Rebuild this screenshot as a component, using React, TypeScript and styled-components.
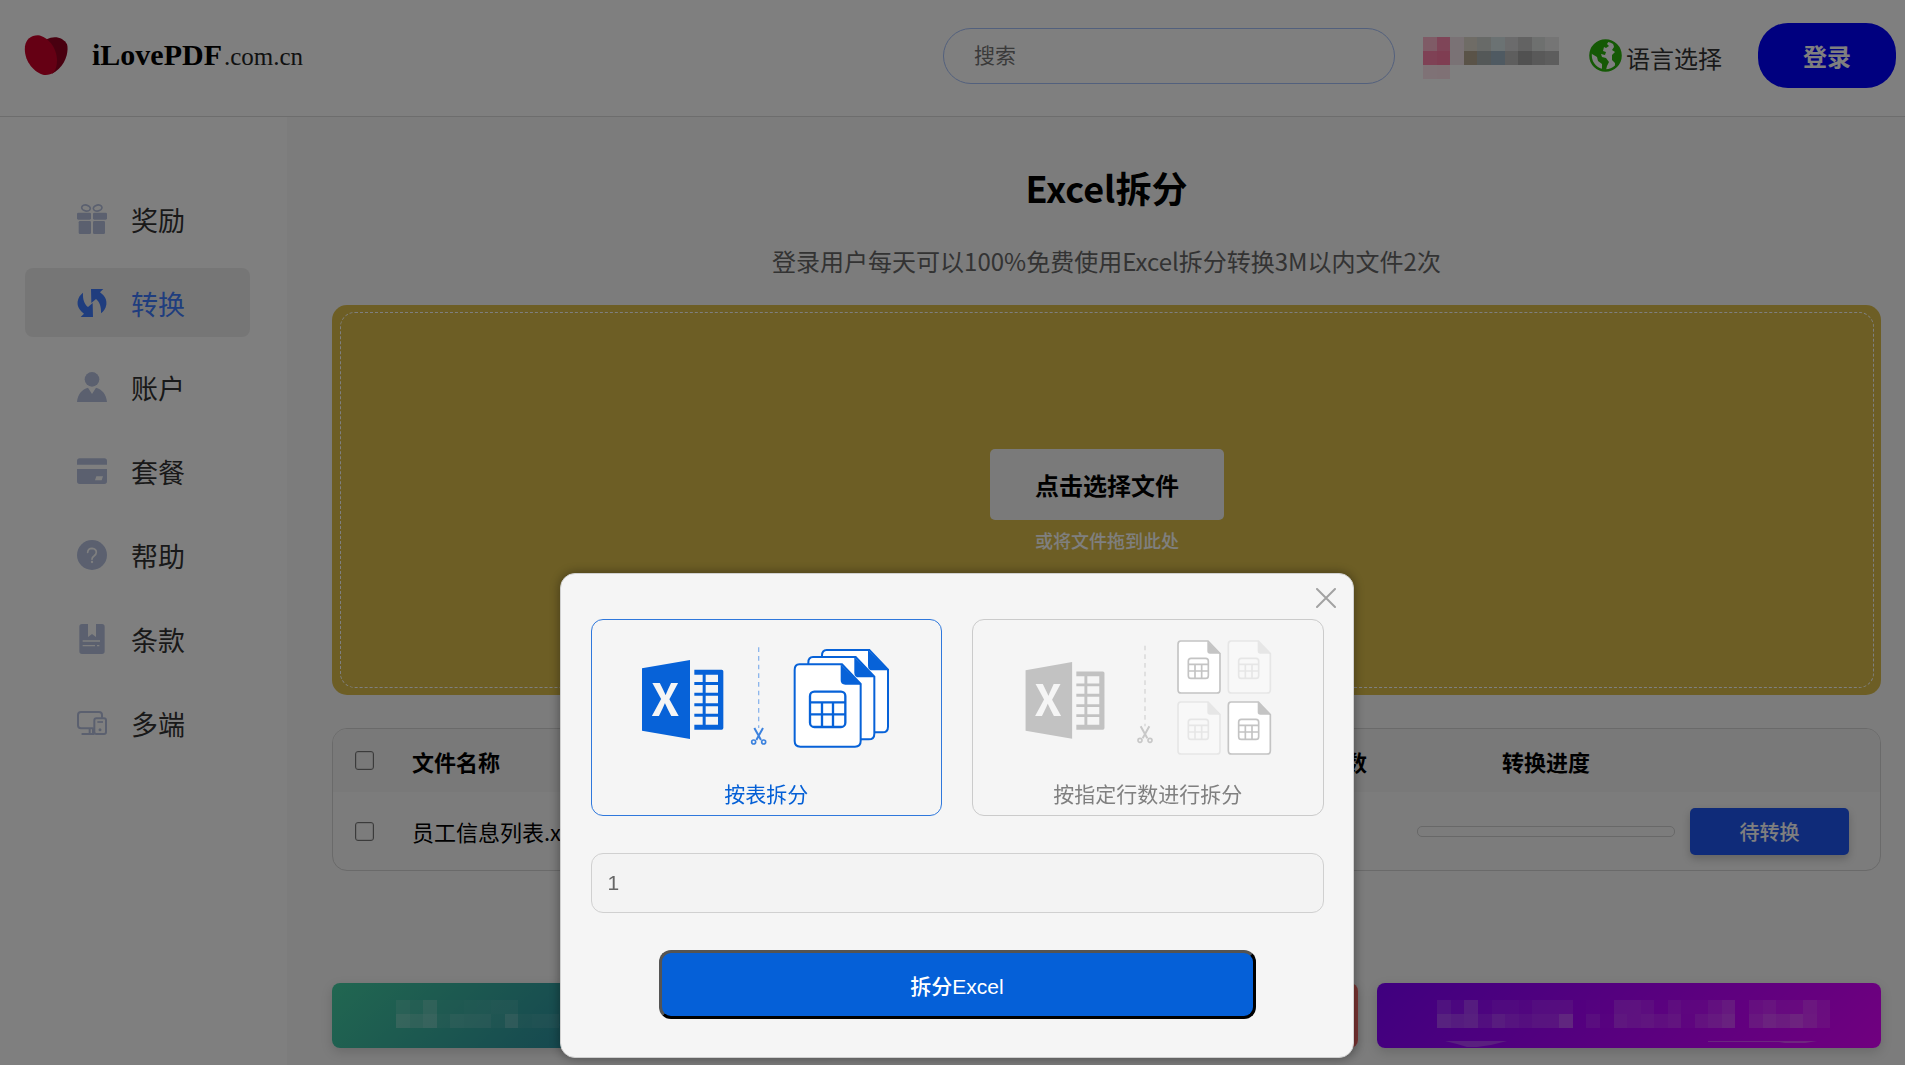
import React, { useState } from "react";
import styled, { createGlobalStyle } from "styled-components";

const GlobalStyle = createGlobalStyle`
  *, *::before, *::after { box-sizing: border-box; }
  body {
    margin: 0;
    background: #f8f8f8;
    color: #000;
    font-family: "Noto Sans CJK SC", "Noto Sans", sans-serif;
  }
  button, input { font-family: inherit; }
  h1, p, ul { margin: 0; padding: 0; }
`;

const Page = styled.div`
  min-height: 100vh;
  display: flex;
  flex-direction: column;
`;

/* ---------- header ---------- */

const Header = styled.header`
  display: flex;
  align-items: center;
  height: 117px;
  padding: 0 9px 5px 24px;
  background: #fff;
  border-bottom: 1px solid #dadada;
`;

const Brand = styled.a`
  display: flex;
  align-items: center;
  gap: 24px;
  margin-right: auto;
  color: #000;
  text-decoration: none;
  font-family: "Liberation Serif", serif;
`;

const BrandName = styled.span`
  font-size: 30px;
  font-weight: 700;
  line-height: 40px;
`;

const BrandDomain = styled.span`
  margin-left: 2px;
  font-size: 25px;
  font-weight: 400;
  color: #222;
`;

const SearchInput = styled.input`
  width: 452px;
  height: 56px;
  padding: 0 30px 3px;
  border: 1px solid #a5c0fa;
  border-radius: 28px;
  background: transparent;
  font-size: 21px;
  outline: none;
  &::placeholder { color: #757575; }
`;

const Mosaic = styled.div<{ $cols: number; $left?: number }>`
  display: grid;
  grid-template-columns: repeat(${(p) => p.$cols}, 1fr);
  grid-auto-rows: 14px;
  width: ${(p) => Math.round(p.$cols * 13.55)}px;
  margin-left: ${(p) => p.$left ?? 0}px;
`;

const Cell = styled.i<{ $color: string }>`
  background: ${(p) => p.$color};
`;

const HeaderMosaic = styled(Mosaic)`
  margin: 5px 30px 0 28px;
`;

const Language = styled.button`
  display: flex;
  align-items: center;
  gap: 4px;
  padding: 0;
  border: 0;
  background: none;
  color: #333;
  font-size: 24px;
  line-height: 36px;
  svg { width: 33px; height: 33px; }
  span { padding-top: 5px; }
`;

const LoginButton = styled.button`
  width: 138px;
  height: 65px;
  margin-left: 36px;
  border: 0;
  border-radius: 30px;
  background: #00f;
  color: #fff;
  font-size: 24px;
  font-weight: 700;
`;

/* ---------- sidebar ---------- */

const Body = styled.div`
  flex: 1;
  display: flex;
`;

const Sidebar = styled.nav`
  flex: 0 0 287px;
  padding: 67px 37px 0 25px;
  background: #fff;
  ul {
    display: flex;
    flex-direction: column;
    gap: 15px;
    list-style: none;
  }
`;

const NavLink = styled.a<{ $active?: boolean }>`
  display: flex;
  align-items: center;
  gap: 24px;
  height: 69px;
  padding-left: 52px;
  border-radius: 8px;
  background: ${(p) => (p.$active ? "#ededed" : "transparent")};
  color: ${(p) => (p.$active ? "#3f7bfc" : "#333")};
  font-size: 27px;
  text-decoration: none;
  svg {
    width: 30px;
    height: 30px;
    color: ${(p) => (p.$active ? "#3f7bfc" : "#b6c1df")};
  }
  span { padding-top: 2px; }
`;

/* ---------- main ---------- */

const Main = styled.main`
  flex: 1;
  min-width: 0;
  padding: 42px 24px 18px 45px;
`;

const Title = styled.h1`
  font-size: 36px;
  line-height: 56px;
  font-weight: 700;
  text-align: center;
`;

const Subtitle = styled.p`
  margin-top: 28px;
  color: #666;
  font-size: 24px;
  line-height: 36px;
  text-align: center;
`;

const DropZone = styled.section`
  height: 390px;
  margin-top: 26px;
  padding: 7px 7px 7px 8px;
  border-radius: 15px;
  background: #dbbd4a;
`;

const DropInner = styled.div`
  display: flex;
  flex-direction: column;
  align-items: center;
  height: 100%;
  padding-top: 136px;
  border: 1px dashed #fff;
  border-radius: 15px;
`;

const PickButton = styled.button`
  width: 234px;
  height: 71px;
  border: 0;
  border-radius: 5px;
  background: #f4f4f4;
  color: #000;
  font-size: 24px;
  font-weight: 700;
`;

const DropHint = styled.p`
  margin-top: 6px;
  color: #fff;
  font-size: 18px;
  font-weight: 500;
  line-height: 28px;
`;

const TableFrame = styled.section`
  margin-top: 33px;
  border: 1px solid #d4d4d4;
  border-radius: 15px;
  overflow: hidden;
`;

const FileTable = styled.table`
  width: 100%;
  table-layout: fixed;
  border-collapse: collapse;
  font-size: 22px;
  line-height: 32px;
  th, td { padding: 0; text-align: center; }
  thead tr { height: 63px; background: #f3f3f3; }
  tbody tr { height: 78px; }
`;

const Col = styled.col<{ $w?: number }>`
  width: ${(p) => (p.$w ? `${p.$w}px` : "auto")};
`;

const NameHead = styled.th`
  && { text-align: left; }
`;

const NameCell = styled.td`
  && { text-align: left; }
`;

const TickBox = styled.input`
  appearance: none;
  display: block;
  width: 19px;
  height: 19px;
  margin: 0 0 0 22px;
  border: 1px solid #767676;
  border-radius: 3px;
  background: transparent;
  outline: 0;
  box-shadow: inset 0 0 0 1px rgba(118, 118, 118, 0.2);
`;

const Progress = styled.div`
  height: 11px;
  margin: 0 15px;
  border: 1px solid #d0d0d0;
  border-radius: 5px;
`;

const ConvertButton = styled.button`
  display: block;
  width: 159px;
  height: 47px;
  border: 0;
  border-radius: 5px;
  background: #1f56f2;
  color: #fff;
  font-size: 20px;
  font-weight: 500;
  box-shadow: 0 4px 8px rgba(0, 0, 0, 0.2);
`;

const Promos = styled.section`
  display: grid;
  grid-template-columns: repeat(3, 1fr);
  gap: 19px;
  margin-top: 112px;
`;

const Promo = styled.a<{ $from: string; $to: string }>`
  position: relative;
  display: flex;
  align-items: center;
  height: 65px;
  padding: 0 0 3px 64px;
  border-radius: 8px;
  background: linear-gradient(135deg, ${(p) => p.$from}, ${(p) => p.$to});
  color: #fff;
  font-size: 24px;
  text-decoration: none;
  box-shadow: 0 4px 12px rgba(0, 0, 0, 0.15);
`;

const PromoWisps = styled.svg`
  position: absolute;
  right: 0;
  bottom: 0;
`;

/* ---------- modal ---------- */

const Overlay = styled.div`
  position: fixed;
  inset: 0;
  display: flex;
  align-items: flex-end;
  justify-content: center;
  padding: 0 0 7px 8px;
  background: rgba(0, 0, 0, 0.5);
`;

const Dialog = styled.form`
  position: relative;
  display: flex;
  flex-direction: column;
  width: 794px;
  padding: 45px 29px 38px 30px;
  border: 1px solid #d0d0d0;
  border-radius: 15px;
  background: #f5f5f5;
  box-shadow: 0 0 12px rgba(0, 0, 0, 0.4);
`;

const CloseButton = styled.button`
  position: absolute;
  top: 14px;
  right: 17px;
  width: 20px;
  height: 20px;
  padding: 0;
  border: 0;
  background: none;
  svg { display: block; }
`;

const Options = styled.div`
  display: grid;
  grid-template-columns: 1fr 1fr;
  gap: 30px;
`;

const Option = styled.button<{ $active: boolean }>`
  display: flex;
  flex-direction: column;
  align-items: center;
  height: 197px;
  padding: 0;
  border: 1px solid ${(p) => (p.$active ? "#2f78dc" : "#cbcbcb")};
  border-radius: 12px;
  background: transparent;
  color: ${(p) => (p.$active ? "#0560d6" : "#808080")};
  font-size: 21px;
  line-height: 32px;
  svg { display: block; width: 348px; height: 149px; margin-bottom: 8px; }
`;

const RowsInput = styled.input`
  height: 60px;
  margin-top: 37px;
  padding: 0 16px;
  border: 1px solid #d0d0d0;
  border-radius: 12px;
  background: #f3f3f3;
  color: #666;
  font-family: "Liberation Sans", sans-serif;
  font-size: 21px;
  outline: none;
`;

const SplitButton = styled.button`
  width: 597px;
  height: 69px;
  margin: 37px auto 0;
  border: 3px outset #000;
  border-radius: 12px;
  background: #0560d8;
  color: #fff;
  font-family: "Liberation Sans", "Noto Sans CJK SC", sans-serif;
  font-size: 21px;
  font-weight: 500;
`;

/* ---------- drawings ---------- */

const HeartLogo = () => (
  <svg width="44" height="41" viewBox="0 0 132 123" aria-hidden="true">
    <path d="M68 13C90 0 119 7 129 28C136 52 122 98 84 116C70 90 60 40 68 13Z" fill="#930020" />
    <path d="M3 34C6 14 20 1 42 1C72 5 98 38 99 76C99 92 95 105 89 112C82 118 72 121 60 120C28 113-2 74 3 34Z" fill="#cb0028" />
  </svg>
);

const Globe = () => (
  <svg viewBox="0 0 33 33" aria-hidden="true">
    <circle cx="16.500" cy="16.500" r="15" fill="none" stroke="#2bb30b" strokeWidth="2.600" />
    <path
      fill="#2bb30b"
      d="M2 13C3 6 9 1 16 1L20 2L18 5L20 7L17 9L15 8L14 12L17 13L16 16L12 15L13 18L17 19L20 23L18 27L17 31L13 30L13 25L9 22L8 18L3 15Z"
    />
    <path fill="#2bb30b" d="M24 4C29 7 32 12 32 17C32 22 29 27 26 29L26 24L23 21L23 16L26 13L23 11L25 8Z" />
  </svg>
);

const GiftIcon = () => (
  <svg viewBox="0 0 90 90" fill="currentColor" aria-hidden="true">
    <ellipse cx="27" cy="12" rx="13" ry="9" fill="none" stroke="currentColor" strokeWidth="5" transform="rotate(12 27 12)" />
    <ellipse cx="62" cy="12" rx="13" ry="9" fill="none" stroke="currentColor" strokeWidth="5" transform="rotate(-12 62 12)" />
    <rect x="0" y="26" width="42" height="21" rx="4" />
    <rect x="48" y="26" width="42" height="21" rx="4" />
    <rect x="5" y="51" width="37" height="39" rx="4" />
    <rect x="48" y="51" width="36" height="39" rx="4" />
  </svg>
);

const ConvertIcon = () => {
  const d = "M42 3H79L69 13C84 24 90 36 88 50C86 62 80 70 72 76C73 56 68 42 57 33L43 45Z";
  return (
    <svg viewBox="0 0 90 90" fill="currentColor" aria-hidden="true">
      <path d={d} />
      <path d={d} transform="rotate(180 45 45)" />
    </svg>
  );
};

const UserIcon = () => (
  <svg viewBox="0 0 90 90" fill="currentColor" aria-hidden="true">
    <circle cx="45" cy="22" r="22" />
    <path d="M0 90C2 66 15 52 33 47L45 66L57 47C75 52 88 66 90 90Z" />
  </svg>
);

const CardIcon = () => (
  <svg viewBox="0 0 90 90" fill="currentColor" aria-hidden="true">
    <path d="M0 26V15Q0 7 8 7H82Q90 7 90 15V26Z" />
    <path fillRule="evenodd" d="M0 39H90V76Q90 84 82 84H8Q0 84 0 76ZM58 61L54 73H74L78 61Z" />
  </svg>
);

const HelpIcon = () => (
  <svg viewBox="0 0 90 90" aria-hidden="true">
    <circle cx="45" cy="45" r="45" fill="currentColor" />
    <path d="M32 37Q33 25 45 25Q58 26 58 37Q58 43 51 48Q45 52 45 58" fill="none" stroke="#fff" strokeWidth="5" strokeLinecap="round" />
    <circle cx="45" cy="66" r="3.500" fill="#fff" />
  </svg>
);

const TermsIcon = () => (
  <svg viewBox="0 0 90 90" aria-hidden="true">
    <path fill="currentColor" d="M15 0H33V39L45 30L57 39V0H75Q83 0 83 8V82Q83 90 75 90H15Q7 90 7 82V8Q7 0 15 0Z" />
    <path d="M17 51H69M17 65H54M60 65H67" stroke="#fff" strokeWidth="4" />
  </svg>
);

const DevicesIcon = () => (
  <svg viewBox="0 0 90 90" fill="none" stroke="currentColor" strokeWidth="6" aria-hidden="true">
    <path d="M48 61H12Q3 61 3 52V21Q3 12 12 12H66Q75 12 75 21V28M16 78H50M38 62V78M48 62V78" strokeLinecap="round" />
    <rect x="52" y="31" width="35" height="47" rx="6" />
    <path d="M61 42H78" strokeWidth="5" />
    <circle cx="69" cy="65" r="2" strokeWidth="5" />
  </svg>
);

const ExcelMark = ({ color }: { color: string }) => (
  <g>
    <path d="M276 313L420 288V525L276 500Z" fill={color} />
    <text
      x="346"
      y="456"
      textAnchor="middle"
      fontFamily="Noto Sans CJK SC, sans-serif"
      fontWeight="700"
      fontSize="134"
      fill="#f5f5f5"
    >
      X
    </text>
    <path
      d="M433 317H515Q520 317 520 322V492Q520 497 515 497H433V482H458V458H433V449H458V427H433V418H458V395H433V386H458V363H433V354H458V332H433ZM467 332V354H504V332ZM467 363V386H504V363ZM467 395V418H504V395ZM467 427V449H504V427ZM467 458V482H504V458Z"
      fillRule="evenodd"
      fill={color}
    />
  </g>
);

const Scissors = ({ color, line }: { color: string; line: string }) => (
  <g fill="none" stroke={color} strokeWidth="5">
    <path d="M626 250V492" stroke={line} strokeWidth="4" strokeDasharray="14 12" />
    <path d="M613 492L633 528M639 492L619 528" strokeWidth="6" />
    <circle cx="611" cy="534" r="6" />
    <circle cx="641" cy="534" r="6" />
  </g>
);

const sheetPath = "M748 301H876L932 360V531Q932 548 915 548H751Q734 548 734 531V318Q734 301 748 301Z";

const Sheet = ({ color, fill = "#fff" }: { color: string; fill?: string }) => (
  <g>
    <path d={sheetPath} fill={fill} stroke={color} strokeWidth="6" />
    <path d="M872 301L934 362H886Q872 362 872 348Z" fill={color} />
  </g>
);

const Grid = ({ color }: { color: string }) => (
  <g fill="none" stroke={color} strokeWidth="7">
    <rect x="780" y="383" width="106" height="106" rx="13" />
    <path d="M780 415H886M780 451H886M816 415V489M849 415V489" />
  </g>
);

const BySheetArt = () => {
  const blue = "#0762d8";
  return (
    <svg viewBox="126 168 1044 447" aria-hidden="true">
      <ExcelMark color={blue} />
      <Scissors color="#3c82de" line="#8db6ec" />
      <g transform="translate(82 -43)"><Sheet color={blue} /></g>
      <g transform="translate(41 -22)"><Sheet color={blue} /></g>
      <Sheet color={blue} />
      <Grid color={blue} />
    </svg>
  );
};

const SmallSheet = ({ x, y, faint }: { x: number; y: number; faint?: boolean }) => {
  const color = faint ? "#e6e6e6" : "#c4c4c4";
  return (
    <g transform={`translate(${x} ${y})`} fill="none" stroke={color} strokeWidth="5">
      <path d="M10 2H92L128 40V148Q128 158 118 158H12Q2 158 2 148V12Q2 2 10 2Z" fill={faint ? "#f8f8f8" : "#fff"} />
      <path d="M90 2L129 40H98Q90 40 90 32Z" fill={color} stroke="none" />
      <rect x="33" y="54" width="60" height="60" rx="8" />
      <path d="M33 72H93M33 92H93M53 72V114M73 72V114" />
    </g>
  );
};

const ByRowsArt = () => (
  <svg viewBox="69 168 1044 447" aria-hidden="true">
    <g transform="translate(-44 15) scale(0.970)"><ExcelMark color="#c2c2c2" /></g>
    <g transform="translate(-44 -5)"><Scissors color="#c8c8c8" line="#d6d6d6" /></g>
    <SmallSheet x={679} y={229} />
    <SmallSheet x={830} y={229} faint />
    <SmallSheet x={679} y={412} faint />
    <SmallSheet x={830} y={412} />
  </svg>
);

/* ---------- data ---------- */

const navItems = [
  { label: "奖励", Icon: GiftIcon },
  { label: "转换", Icon: ConvertIcon, active: true },
  { label: "账户", Icon: UserIcon },
  { label: "套餐", Icon: CardIcon },
  { label: "帮助", Icon: HelpIcon },
  { label: "条款", Icon: TermsIcon },
  { label: "多端", Icon: DevicesIcon },
];

const headerCells = [
  "#ffb6cc", "#ff8ab0", "#f4e4ea", "#ded8cc", "#d0d4d0", "#d6e4e6", "#d6d6d8", "#c6c6c6", "#dce0de", "#eaeaea",
  "#ff82aa", "#ff7aa4", "#f4e4ea", "#b4a690", "#a8b0b0", "#9eb4c4", "#bcbcbc", "#a2a2a2", "#b2b2b2", "#bababa",
  "#ffe4ec", "#ffe2ea",
];

const greenCells = [
  12, 7, 20, 3, 3, 5, 6, 8, 8, 0, 0, 0,
  25, 20, 27, 7, 15, 13, 13, 6, 22, 6, 8, 8,
];

const purpleCells = [
  14, 6, 22, 3, 8, 8, 5, 10, 10, 10, 0, 2, 0, 14, 14, 10, 2, 10, 5, 5, 13, 20, 0, 12, 16, 8, 8, 18, 10,
  27, 22, 25, 12, 22, 16, 12, 16, 16, 30, 0, 10, 2, 18, 14, 17, 12, 16, 4, 14, 20, 26, 0, 18, 27, 22, 28, 20, 10,
];

const veil = (percent: number) => `rgba(255, 255, 255, ${percent / 100})`;

export default function App() {
  const [mode, setMode] = useState("sheet");
  const [rows, setRows] = useState("1");

  return (
    <Page>
      <GlobalStyle />
      <Header>
        <Brand href="#">
          <HeartLogo />
          <BrandName>
            iLovePDF<BrandDomain>.com.cn</BrandDomain>
          </BrandName>
        </Brand>
        <SearchInput type="search" placeholder="搜索" aria-label="搜索" />
        <HeaderMosaic $cols={10} aria-hidden="true">
          {headerCells.map((color, i) => <Cell key={i} $color={color} />)}
        </HeaderMosaic>
        <Language type="button">
          <Globe />
          <span>语言选择</span>
        </Language>
        <LoginButton type="button">登录</LoginButton>
      </Header>

      <Body>
        <Sidebar>
          <ul>
            {navItems.map(({ label, Icon, active }) => (
              <li key={label}>
                <NavLink href="#" $active={active}>
                  <Icon />
                  <span>{label}</span>
                </NavLink>
              </li>
            ))}
          </ul>
        </Sidebar>

        <Main>
          <Title>Excel拆分</Title>
          <Subtitle>登录用户每天可以100%免费使用Excel拆分转换3M以内文件2次</Subtitle>

          <DropZone>
            <DropInner>
              <PickButton type="button">点击选择文件</PickButton>
              <DropHint>或将文件拖到此处</DropHint>
            </DropInner>
          </DropZone>

          <TableFrame>
            <FileTable>
              <colgroup>
                <Col $w={79} />
                <Col />
                <Col $w={158} />
                <Col $w={288} />
                <Col $w={190} />
              </colgroup>
              <thead>
                <tr>
                  <th><TickBox type="checkbox" aria-label="全选" /></th>
                  <NameHead>文件名称</NameHead>
                  <th>转换页数</th>
                  <th>转换进度</th>
                  <th aria-label="操作" />
                </tr>
              </thead>
              <tbody>
                <tr>
                  <td><TickBox type="checkbox" aria-label="员工信息列表" /></td>
                  <NameCell>员工信息列表.xlsx</NameCell>
                  <td />
                  <td><Progress role="progressbar" aria-label="转换进度" aria-valuenow={0} /></td>
                  <td><ConvertButton type="button">待转换</ConvertButton></td>
                </tr>
              </tbody>
            </FileTable>
          </TableFrame>

          <Promos>
            <Promo href="#" $from="#43cea2" $to="#185a9d">
              <Mosaic $cols={12} aria-hidden="true">
                {greenCells.map((n, i) => <Cell key={i} $color={veil(n)} />)}
              </Mosaic>
              工
            </Promo>
            <Promo href="#" $from="#ff9966" $to="#f26464" />
            <Promo href="#" $from="#7f00ff" $to="#e100ff">
              <Mosaic $cols={29} $left={-4} aria-hidden="true">
                {purpleCells.map((n, i) => <Cell key={i} $color={veil(n)} />)}
              </Mosaic>
              <PromoWisps width="436" height="8" viewBox="0 0 436 8" aria-hidden="true">
                <path d="M0 1H62L46 5L32 7H22L12 4Z" fill="#fff" opacity="0.250" />
                <path d="M263 1H372L360 3H340L334 2H263Z" fill="#fff" opacity="0.300" />
              </PromoWisps>
            </Promo>
          </Promos>
        </Main>
      </Body>

      <Overlay>
        <Dialog role="dialog" aria-label="Excel拆分" onSubmit={(e) => e.preventDefault()}>
          <CloseButton type="button" aria-label="关闭">
            <svg width="20" height="20" viewBox="0 0 20 20" stroke="#a2a2a2" strokeWidth="2" strokeLinecap="round">
              <path d="M1 1L19 19M19 1L1 19" />
            </svg>
          </CloseButton>
          <Options>
            <Option type="button" $active={mode === "sheet"} onClick={() => setMode("sheet")}>
              <BySheetArt />
              按表拆分
            </Option>
            <Option type="button" $active={mode === "rows"} onClick={() => setMode("rows")}>
              <ByRowsArt />
              按指定行数进行拆分
            </Option>
          </Options>
          <RowsInput aria-label="行数" value={rows} onChange={(e) => setRows(e.target.value)} />
          <SplitButton type="submit">拆分Excel</SplitButton>
        </Dialog>
      </Overlay>
    </Page>
  );
}
